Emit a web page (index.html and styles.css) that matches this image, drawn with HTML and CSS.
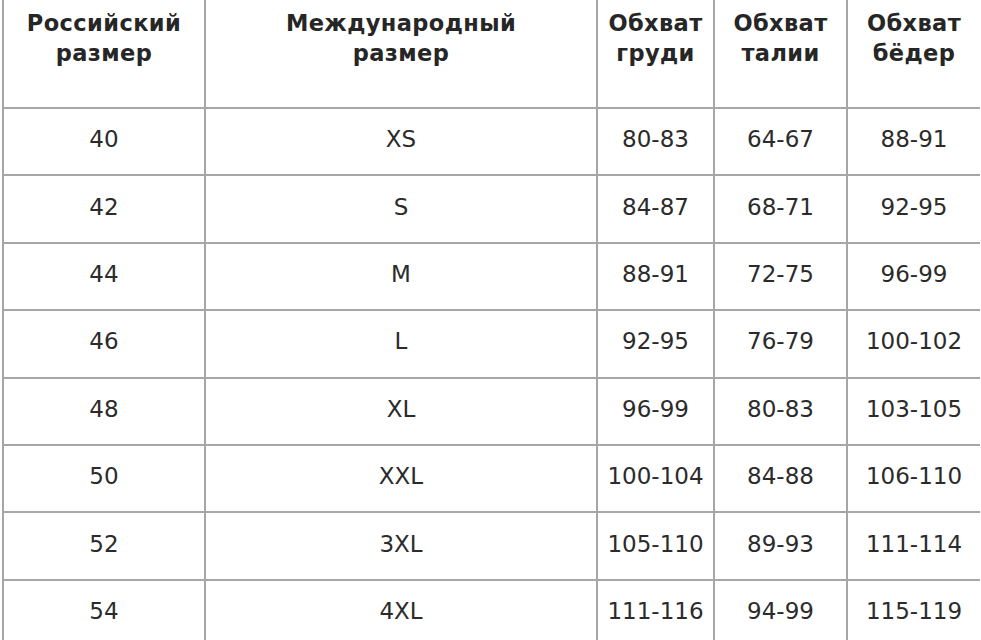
FILE: index.html
```html
<!DOCTYPE html>
<html lang="ru">
<head>
<meta charset="utf-8">
<title>Таблица размеров</title>
<link rel="stylesheet" href="styles.css">
</head>
<body>
<table class="sizes">
  <colgroup>
    <col class="c1"><col class="c2"><col class="c3"><col class="c4"><col class="c5">
  </colgroup>
  <thead>
    <tr>
      <th>Российский<br>размер</th>
      <th>Международный<br>размер</th>
      <th>Обхват<br>груди</th>
      <th>Обхват<br>талии</th>
      <th>Обхват<br>бёдер</th>
    </tr>
  </thead>
  <tbody>
    <tr><td>40</td><td>XS</td><td>80-83</td><td>64-67</td><td>88-91</td></tr>
    <tr><td>42</td><td>S</td><td>84-87</td><td>68-71</td><td>92-95</td></tr>
    <tr><td>44</td><td>M</td><td>88-91</td><td>72-75</td><td>96-99</td></tr>
    <tr><td>46</td><td>L</td><td>92-95</td><td>76-79</td><td>100-102</td></tr>
    <tr><td>48</td><td>XL</td><td>96-99</td><td>80-83</td><td>103-105</td></tr>
    <tr><td>50</td><td>XXL</td><td>100-104</td><td>84-88</td><td>106-110</td></tr>
    <tr><td>52</td><td>3XL</td><td>105-110</td><td>89-93</td><td>111-114</td></tr>
    <tr><td>54</td><td>4XL</td><td>111-116</td><td>94-99</td><td>115-119</td></tr>
  </tbody>
</table>
</body>
</html>
```
FILE: styles.css
```css
html, body {
  margin: 0;
  padding: 0;
  background: #ffffff;
}
body {
  font-family: "DejaVu Sans", "Liberation Sans", sans-serif;
  color: #2e2e2e;
  overflow: hidden;
}
.sizes {
  margin-left: 2px;
  border-collapse: collapse;
  table-layout: fixed;
  width: 977px;
}
.c1 { width: 202px; }
.c2 { width: 392px; }
.c3 { width: 117px; }
.c4 { width: 133px; }
.c5 { width: 133px; }
.sizes th,
.sizes td {
  border-left: 2px solid #a6a6a6;
  border-bottom: 2px solid #a6a6a6;
  text-align: center;
  padding: 0;
}
.sizes thead tr {
  height: 108px;
}
.sizes th {
  vertical-align: top;
  padding-top: 8px;
  font-size: 22.5px;
  line-height: 30px;
  letter-spacing: 0.4px;
  font-weight: bold;
  color: #262626;
}
.sizes tbody tr {
  height: 67.4px;
}
.sizes td {
  vertical-align: middle;
  font-size: 23px;
  padding-bottom: 5px;
  color: #2b2b2b;
}
```
